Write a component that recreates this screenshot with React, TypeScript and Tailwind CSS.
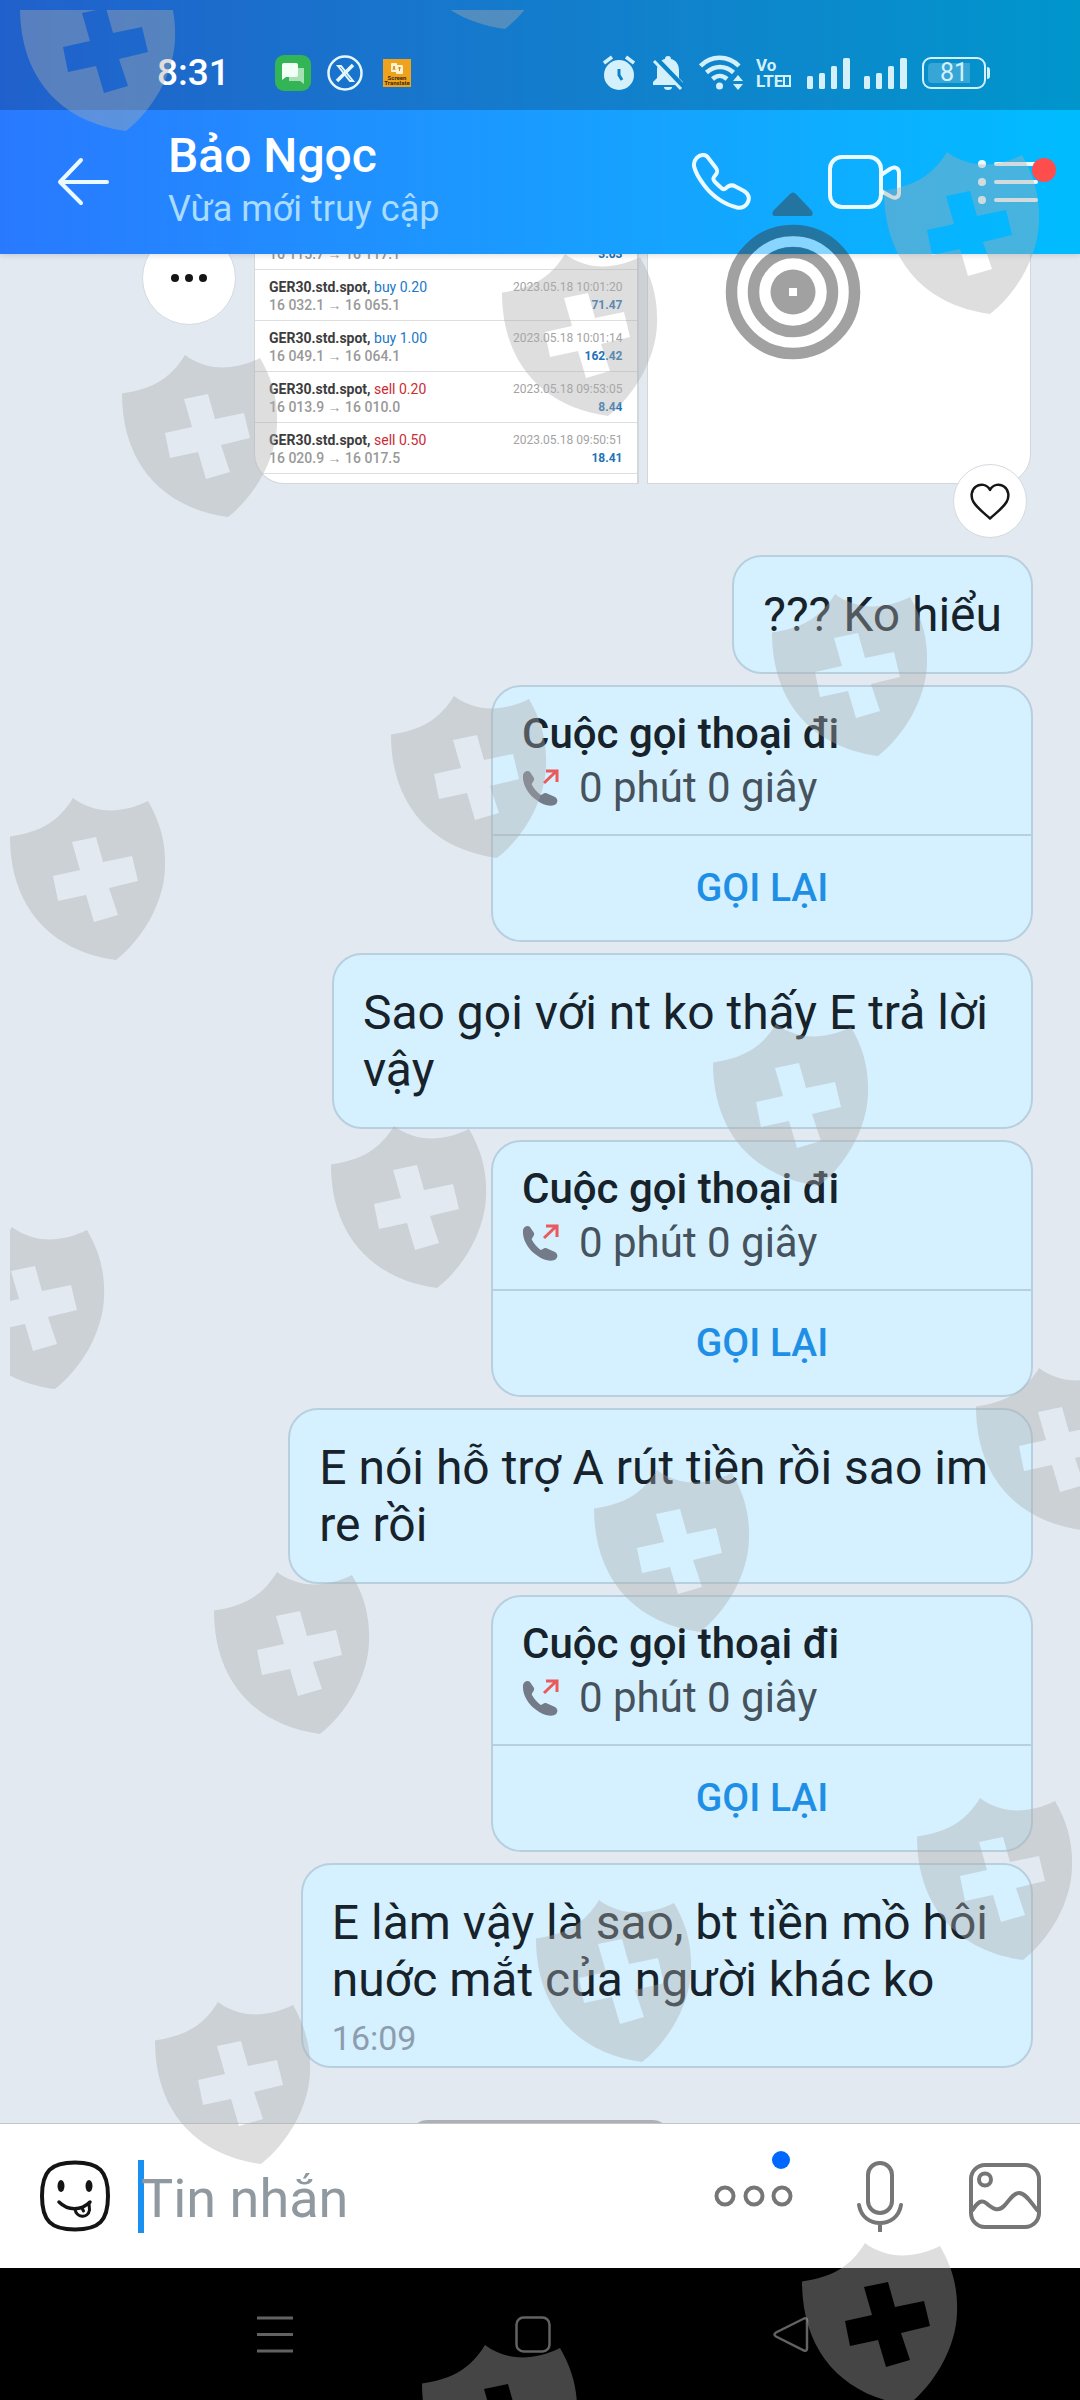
import React from 'react';

interface Trade {
  symbol?: string;
  side?: 'buy' | 'sell';
  volume?: string;
  range: string;
  time?: string;
  profit: string;
}

const trades: Trade[] = [
  { range: '16 115.7 → 16 117.1', profit: '3.03' },
  { symbol: 'GER30.std.spot,', side: 'buy', volume: '0.20', range: '16 032.1 → 16 065.1', time: '2023.05.18 10:01:20', profit: '71.47' },
  { symbol: 'GER30.std.spot,', side: 'buy', volume: '1.00', range: '16 049.1 → 16 064.1', time: '2023.05.18 10:01:14', profit: '162.42' },
  { symbol: 'GER30.std.spot,', side: 'sell', volume: '0.20', range: '16 013.9 → 16 010.0', time: '2023.05.18 09:53:05', profit: '8.44' },
  { symbol: 'GER30.std.spot,', side: 'sell', volume: '0.50', range: '16 020.9 → 16 017.5', time: '2023.05.18 09:50:51', profit: '18.41' },
];

const shields = [
  [20, -31], [399, -133],
  [122, 355], [502, 254], [884, 152],
  [10, 798], [391, 696], [772, 594],
  [-51, 1227], [331, 1126], [713, 1024],
  [214, 1572], [594, 1470], [976, 1368],
  [155, 2002], [536, 1900], [917, 1798],
  [422, 2345], [802, 2243],
];

const Signal = () => (
  <svg width="43" height="32" viewBox="0 0 43 32" fill="currentColor" aria-hidden="true">
    <rect x="0" y="19" width="6" height="13" rx="1.5" />
    <rect x="12" y="16" width="6" height="16" rx="1.5" />
    <rect x="24" y="9" width="6" height="23" rx="1.5" />
    <rect x="36" y="1" width="7" height="31" rx="1.5" />
  </svg>
);

const StatusBar = () => (
  <div className="flex h-[110px] items-center bg-black/20 pt-[35px] pr-[94px] pl-[157px] text-[#d4f1fb]">
    <span className="w-[118px] text-[37px] leading-10 font-medium text-white">8:31</span>

    {/* Notification icons */}
    <div className="flex flex-1 items-center">
      <svg width="36" height="36" viewBox="0 0 36 36" aria-hidden="true">
        <rect width="36" height="36" rx="9" fill="#33b455" />
        <path d="M14 13h15v16l-4-3H14z" fill="#a8dfb5" />
        <path d="M9 8h12a2 2 0 0 1 2 2v10a2 2 0 0 1-2 2H11l-4 3V10a2 2 0 0 1 2-2z" fill="#f2fff5" />
      </svg>
      <svg className="ml-4" width="36" height="36" viewBox="0 0 36 36" fill="none" stroke="#e4f7ff" aria-hidden="true">
        <circle cx="18" cy="18" r="16.5" strokeWidth="2.5" />
        <path d="M11 11l12 15h3L14 11z" strokeWidth="2" />
        <path d="M26 10L10 26" strokeWidth="3.5" />
      </svg>
      <div className="ml-[20px] flex h-[28px] w-[28px] flex-col items-center bg-[#efa31d] text-[6px] leading-[5px] font-bold text-[#3a2a10]">
        <svg width="14" height="16" viewBox="0 0 14 16" aria-hidden="true">
          <rect x="1" y="4" width="6" height="9" rx="1" fill="#fff3cf" />
          <rect x="6" y="6" width="7" height="9" rx="1" fill="#fff3cf" />
          <path d="M3 11l1-4 1 4M8 9h3M9.500 8v4" stroke="#c98a20" fill="none" />
        </svg>
        <span>Screen</span>
        <span>Translate</span>
      </div>
    </div>

    {/* System icons */}
    <div className="flex items-center">
      <svg width="32" height="36" viewBox="0 0 32 36" aria-hidden="true">
        <circle cx="16" cy="20" r="15" fill="currentColor" />
        <path d="M1 8l8-6M31 8l-8-6" stroke="currentColor" strokeWidth="3.500" />
        <path d="M16 14v6l3 5" stroke="#0b83cb" strokeWidth="3" fill="none" />
      </svg>
      <svg className="ml-[17px]" width="32" height="36" viewBox="0 0 32 36" aria-hidden="true">
        <path d="M16 1a3 3 0 0 1 3 3c5 1 8 6 8 11v8l4 4v3H1v-3l4-4v-8c0-5 3-10 8-11a3 3 0 0 1 3-3z" fill="currentColor" />
        <path d="M12 32h8a4 3 0 0 1-8 0z" fill="currentColor" />
        <path d="M4 4l28 29" stroke="#0b83cb" strokeWidth="6" />
        <path d="M2 6l27 28" stroke="currentColor" strokeWidth="3" />
      </svg>
      <svg className="ml-[15px]" width="44" height="36" viewBox="0 0 44 36" aria-hidden="true">
        <g stroke="currentColor" strokeWidth="4.500" fill="none">
          <path d="M1.500 11C12 0 29 0 40 11" />
          <path d="M7.500 17.500c8-7.500 19-7.500 27 0" />
          <path d="M13.500 24c4.500-4 10-4 14.500 0" />
        </g>
        <circle cx="20.500" cy="31" r="3.500" fill="currentColor" />
        <path d="M34 26l5-6 5 6zM34 29l5 6 5-6z" fill="currentColor" />
      </svg>
      <div className="ml-[13px] flex w-[38px] flex-col text-[17px] leading-4 font-bold">
        <span>Vo</span>
        <span className="flex items-center">
          LTE
          <span className="h-3 w-2 border-2 border-current" />
        </span>
      </div>
      <div className="ml-[13px] flex gap-[14px]">
        <Signal />
        <Signal />
      </div>
      <div className="relative ml-[15px] flex h-[32px] w-[64px] items-center justify-center rounded-[9px] border-2 border-current">
        <span className="absolute inset-y-1 left-1 w-[42px] rounded-l-[4px] bg-white/20" />
        <span className="relative text-[25px] leading-[28px]">81</span>
        <span className="absolute -right-[6px] h-3 w-[3px] rounded-r bg-current" />
      </div>
    </div>
  </div>
);

const ChatHeader = () => (
  <div className="flex h-[144px] items-center pr-[24px] pl-[56px]">
    <button aria-label="Quay lại">
      <svg width="54" height="50" viewBox="0 0 54 50" fill="none" stroke="#eafaff" strokeWidth="4" strokeLinecap="round" strokeLinejoin="round">
        <path d="M51 25H4M25 3L4 25l21 21" />
      </svg>
    </button>
    <div className="ml-[58px] flex-1">
      <h1 className="text-[48px] leading-[54px] font-medium text-white">Bảo Ngọc</h1>
      <p className="text-[36px] leading-[52px] text-[#a9dcff]">Vừa mới truy cập</p>
    </div>
    <button aria-label="Gọi thoại">
      <svg width="60" height="58" viewBox="0 0 60 58" fill="none" stroke="#eafaff" strokeWidth="4" strokeLinejoin="round">
        <path d="M2 13C1.500 6 7 1.500 12 2c3 .3 4 2 5.500 4.500L24 15c2 3 1.500 4.500-.5 7-2.500 3-3 4-.5 7 2 2 4.500 4.500 7 6.500 3 2 3.500-.5 6-2 2.500-1.500 5-1.500 7.500 0l8.500 4.500c4.500 3 5.500 6 4.500 9.500C55 53 50 55.500 45 54.500 33 52 20 43 12 32 6 24 3 18 2 13z" />
      </svg>
    </button>
    <button aria-label="Gọi video" className="ml-[76px]">
      <svg width="74" height="54" viewBox="0 0 74 54" fill="none" stroke="#eafaff" strokeWidth="4" strokeLinejoin="round">
        <rect x="2" y="2" width="51" height="50" rx="12" />
        <path d="M53 20l9-6c5-3 9-1 9 4v20c0 5-5 6-9 3l-9-5" />
      </svg>
    </button>
    <button aria-label="Tùy chọn" className="relative ml-[76px]">
      <svg width="78" height="44" viewBox="0 0 78 44" fill="#eafaff">
        <circle cx="4" cy="4" r="4" />
        <circle cx="4" cy="22" r="4" />
        <circle cx="4" cy="40" r="4" />
        <path d="M18 4h40M18 22h40M18 40h40" stroke="#eafaff" strokeWidth="4" strokeLinecap="round" />
      </svg>
      <span className="absolute -top-[2px] right-0 h-6 w-6 rounded-full bg-[#ff4c4c]" />
    </button>
  </div>
);

const MediaMessage = () => (
  <div className="flex h-[412px] items-center pr-[2px] pl-[142px]">
    <button aria-label="Thêm" className="flex h-[94px] w-[94px] items-center justify-center gap-[6px] rounded-full border border-[#d5dae0] bg-white">
      <span className="h-2 w-2 rounded-full bg-[#151515]" />
      <span className="h-2 w-2 rounded-full bg-[#151515]" />
      <span className="h-2 w-2 rounded-full bg-[#151515]" />
    </button>
    <div className="relative ml-[18px] grid h-full flex-1 grid-cols-2 gap-2">
      <div className="flex flex-col justify-end overflow-hidden rounded-bl-[30px] border border-r-2 border-[#d3d7dc] bg-white pb-[9px]">
        {trades.map((trade) => (
          <div key={trade.profit} className="flex h-[51px] shrink-0 items-end justify-between border-b border-[#dedede] pr-[14px] pb-[6px] pl-[14px]">
            <div className="text-[14px] leading-[18px] font-bold text-[#3d3d3d]">
              {trade.symbol && (
                <p>
                  {trade.symbol}{' '}
                  <span className={trade.side === 'buy' ? 'font-normal text-[#1b78c9]' : 'font-normal text-[#cc2a33]'}>
                    {trade.side} {trade.volume}
                  </span>
                </p>
              )}
              <p className="font-medium text-[#999]">{trade.range}</p>
            </div>
            <div className="text-right text-[12px] leading-[18px] text-[#a3a3a3]">
              {trade.time && <p>{trade.time}</p>}
              <p className="font-bold text-[#1f73b7]">{trade.profit}</p>
            </div>
          </div>
        ))}
      </div>
      <div className="rounded-br-[30px] border border-[#d3d7dc] bg-white" />
      <button aria-label="Thả tim" className="absolute right-[4px] -bottom-[54px] flex h-[74px] w-[74px] items-center justify-center rounded-full border border-[#d5dae0] bg-white">
        <svg width="40" height="37" viewBox="0 0 40 37" fill="none" stroke="#161616" strokeWidth="2.500" strokeLinejoin="round">
          <path d="M20 7C17 1 10 .5 6 3.500 1 7 .5 14 3.500 19 7 25 14 30 20 35.500 26 30 33 25 36.500 19 39.500 14 39 7 34 3.500 30 .5 23 1 20 7z" />
        </svg>
      </button>
    </div>
  </div>
);

const bubbleStyle = 'shrink-0 rounded-[30px] border-2 border-[#b8cfde] bg-[#d5f1ff]';

interface BubbleProps {
  lines: string[];
  time?: string;
}

const Bubble: React.FC<BubbleProps> = ({ lines, time }) => (
  <div className={`${bubbleStyle} pt-[29px] pl-[29px] ${lines.length > 1 ? 'pr-[43px]' : 'pr-[29px]'} ${time ? 'pb-[8px]' : 'pb-[29px]'}`}>
    {lines.map((line) => (
      <p key={line} className="text-[48px] leading-[57px] whitespace-nowrap text-[#17222a]">{line}</p>
    ))}
    {time && <p className="mt-[10px] text-[34px] leading-10 text-[#8d9dae]">{time}</p>}
  </div>
);

const CallCard = () => (
  <div className={`${bubbleStyle} w-[542px]`}>
    <div className="border-b-2 border-[#b8cfde] px-[29px] pt-5 pb-[19px]">
      <p className="text-[42px] leading-[54px] font-medium text-[#17222a]">Cuộc gọi thoại đi</p>
      <div className="flex items-center gap-[20px]">
        <svg width="37" height="38" viewBox="0 0 37 38" aria-hidden="true">
          <path d="M1 6C2 2 6 1 8 3l4 6c1 3-3 5-2 7 2 4 5 7 8 9.500 2 1.500 3-2 6-1.500l9 4c3 2 3 5 1 7s-6 2-10 1C12 32 0 20 1 6z" fill="#727b87" />
          <path d="M22 14L34.500 2M24 2h11v11" fill="none" stroke="#ea5a5d" strokeWidth="3" />
        </svg>
        <p className="text-[42px] leading-[54px] text-[#46525c]">0 phút 0 giây</p>
      </div>
    </div>
    <button className="h-[104px] w-full text-[39px] font-medium text-[#1f8fe6]">GỌI LẠI</button>
  </div>
);

const InputBar = () => (
  <div className="flex h-[145px] items-center border-t border-[#c3c5ca] bg-white pr-[38px] pl-[39px] text-[#767676]">
    <button aria-label="Biểu cảm">
      <svg width="72" height="72" viewBox="0 0 72 72" fill="none" stroke="#141414" strokeWidth="4" strokeLinecap="round">
        <path d="M36 2.500C60 2.500 69 11 69 36S60 69.500 36 69.500 3 61 3 36 12 2.500 36 2.500z" />
        <ellipse cx="22" cy="26" rx="3.500" ry="6" fill="#141414" stroke="none" />
        <ellipse cx="50" cy="26" rx="3.500" ry="6" fill="#141414" stroke="none" />
        <path d="M20 42c9 9 22 9 31 0" strokeWidth="3.500" />
        <path d="M36 49c1 9 13 10 14.500 1l-.5-7M43 48l1.500 3" strokeWidth="3" />
      </svg>
    </button>
    <div className="relative ml-[27px] flex-1">
      <span className="absolute top-0 left-0 h-[73px] w-[6px] bg-[#1a90f0]" />
      <input
        type="text"
        aria-label="Tin nhắn"
        placeholder="Tin nhắn"
        className="relative h-[73px] w-full pt-[5px] pl-[3px] text-[54px] outline-none placeholder:text-[#8f999f]"
      />
    </div>
    <button aria-label="Thêm" className="relative">
      <svg width="80" height="22" viewBox="0 0 80 22" fill="none" stroke="currentColor" strokeWidth="4">
        <circle cx="11" cy="11" r="8.500" />
        <circle cx="40" cy="11" r="8.500" />
        <circle cx="68" cy="11" r="8.500" />
      </svg>
      <span className="absolute -top-[34px] left-[58px] h-[18px] w-[18px] rounded-full bg-[#0068ff]" />
    </button>
    <button aria-label="Ghi âm" className="ml-[62px]">
      <svg width="48" height="72" viewBox="0 0 48 72" fill="none" stroke="currentColor" strokeWidth="4" strokeLinecap="round">
        <rect x="12" y="3" width="24" height="50" rx="12" />
        <path d="M3 45c2 12 11 18 21 18s19-6 21-18M24 63v8" />
      </svg>
    </button>
    <button aria-label="Hình ảnh" className="ml-[64px]">
      <svg width="74" height="68" viewBox="0 0 74 68" fill="none" stroke="currentColor" strokeWidth="4">
        <rect x="3" y="3" width="68" height="62" rx="14" />
        <circle cx="17" cy="17.500" r="6" />
        <path d="M4 49c5-8 9-12 14-8 7 6 12 9 18 3 5-5 9-13 15-13 7 0 12 10 19 18" />
      </svg>
    </button>
  </div>
);

const NavBar = () => (
  <nav className="flex h-[132px] items-center justify-center gap-[222px] bg-black pr-[14px] text-[#626262]">
    <button aria-label="Ứng dụng gần đây">
      <svg width="36" height="37" viewBox="0 0 36 37" stroke="currentColor" strokeWidth="3">
        <path d="M0 2h36M0 18.500h36M0 35h36" />
      </svg>
    </button>
    <button aria-label="Màn hình chính">
      <svg width="36" height="37" viewBox="0 0 36 37" fill="none" stroke="currentColor" strokeWidth="2.500">
        <rect x="1.500" y="1.500" width="33" height="34" rx="7" />
      </svg>
    </button>
    <button aria-label="Trở về">
      <svg width="36" height="37" viewBox="0 0 36 37" fill="none" stroke="currentColor" strokeWidth="2.500">
        <path d="M31 2.500L3 16.500q-3 2 0 4L31 34.500q3 1 3-2v-28q0-3-3-2z" />
      </svg>
    </button>
  </nav>
);

// Shields scattered over the whole screen by the security app
const ShieldOverlay = () => (
  <div className="pointer-events-none absolute top-[10px] right-0 bottom-0 left-[10px] z-20 overflow-hidden" aria-hidden="true">
    <svg width="1070" height="2390" viewBox="10 10 1070 2390" fill="#acacac" fillOpacity="0.4" fillRule="evenodd">
      {shields.map(([x, y]) => (
        <path
          key={`${x}-${y}`}
          transform={`translate(${x} ${y})`}
          d="M0 38.500C31 34 49 23 63 0C84 16 112 16 138 3C150 24 156 44 155 70C154 105 132 142 106 162C40 153 0 108 0 38.500ZM62 44L86 39L93 64L122 58L128 83L99 90L108 117L84 124L76 97L48 103L43 78L70 72Z"
        />
      ))}
    </svg>
  </div>
);

const TouchTarget = () => (
  <svg className="pointer-events-none absolute top-[190px] left-[725px] z-20" width="136" height="170" viewBox="0 0 136 170" aria-hidden="true">
    <circle cx="68" cy="102" r="50.500" fill="none" stroke="#fff" strokeOpacity="0.5" strokeWidth="11" />
    <circle cx="68" cy="102" r="28" fill="none" stroke="#fff" strokeOpacity="0.5" strokeWidth="11" />
    <g fill="#3a3a3a" fillOpacity="0.48">
      <path d="M65 4q3-3 6 0l16 17q2 5-2 5H50q-4 0-2-5z" />
      <path fillRule="evenodd" d="M68 79.500a22.500 22.500 0 1 0 0 45a22.500 22.500 0 1 0 0-45zM64 98h8v8h-8z" />
    </g>
    <g fill="none" stroke="#3a3a3a" strokeOpacity="0.48" strokeWidth="11.500">
      <circle cx="68" cy="102" r="61.500" />
      <circle cx="68" cy="102" r="39.500" />
    </g>
  </svg>
);

const App: React.FC = () => {
  return (
    <div className="relative flex h-screen flex-col overflow-hidden bg-[#e2e9f1] font-['Roboto',sans-serif]">
      <header className="relative z-10 bg-gradient-to-r from-[#2979ff] to-[#00bcff] shadow-[0_1px_6px_rgba(0,0,0,0.15)]">
        <StatusBar />
        <ChatHeader />
      </header>

      <main className="flex min-h-0 flex-1 flex-col items-end justify-end gap-[11px] overflow-hidden pr-[47px]">
        <div className="mb-[60px] w-full shrink-0">
          <MediaMessage />
        </div>
        <Bubble lines={['??? Ko hiểu']} />
        <CallCard />
        <Bubble lines={['Sao gọi với nt ko thấy E trả lời', 'vậy']} />
        <CallCard />
        <Bubble lines={['E nói hỗ trợ A rút tiền rồi sao im', 're rồi']} />
        <CallCard />
        <Bubble lines={['E làm vậy là sao, bt tiền mồ hôi', 'nuớc mắt của người khác ko']} time="16:09" />
        {/* Next date divider, mostly hidden behind the input bar */}
        <div className="mt-[41px] mr-[364px] -mb-[45px] h-12 w-[258px] shrink-0 rounded-2xl bg-[#adb1b6]" />
      </main>

      <InputBar />
      <NavBar />

      <TouchTarget />
      <ShieldOverlay />
    </div>
  );
};

export default App;
